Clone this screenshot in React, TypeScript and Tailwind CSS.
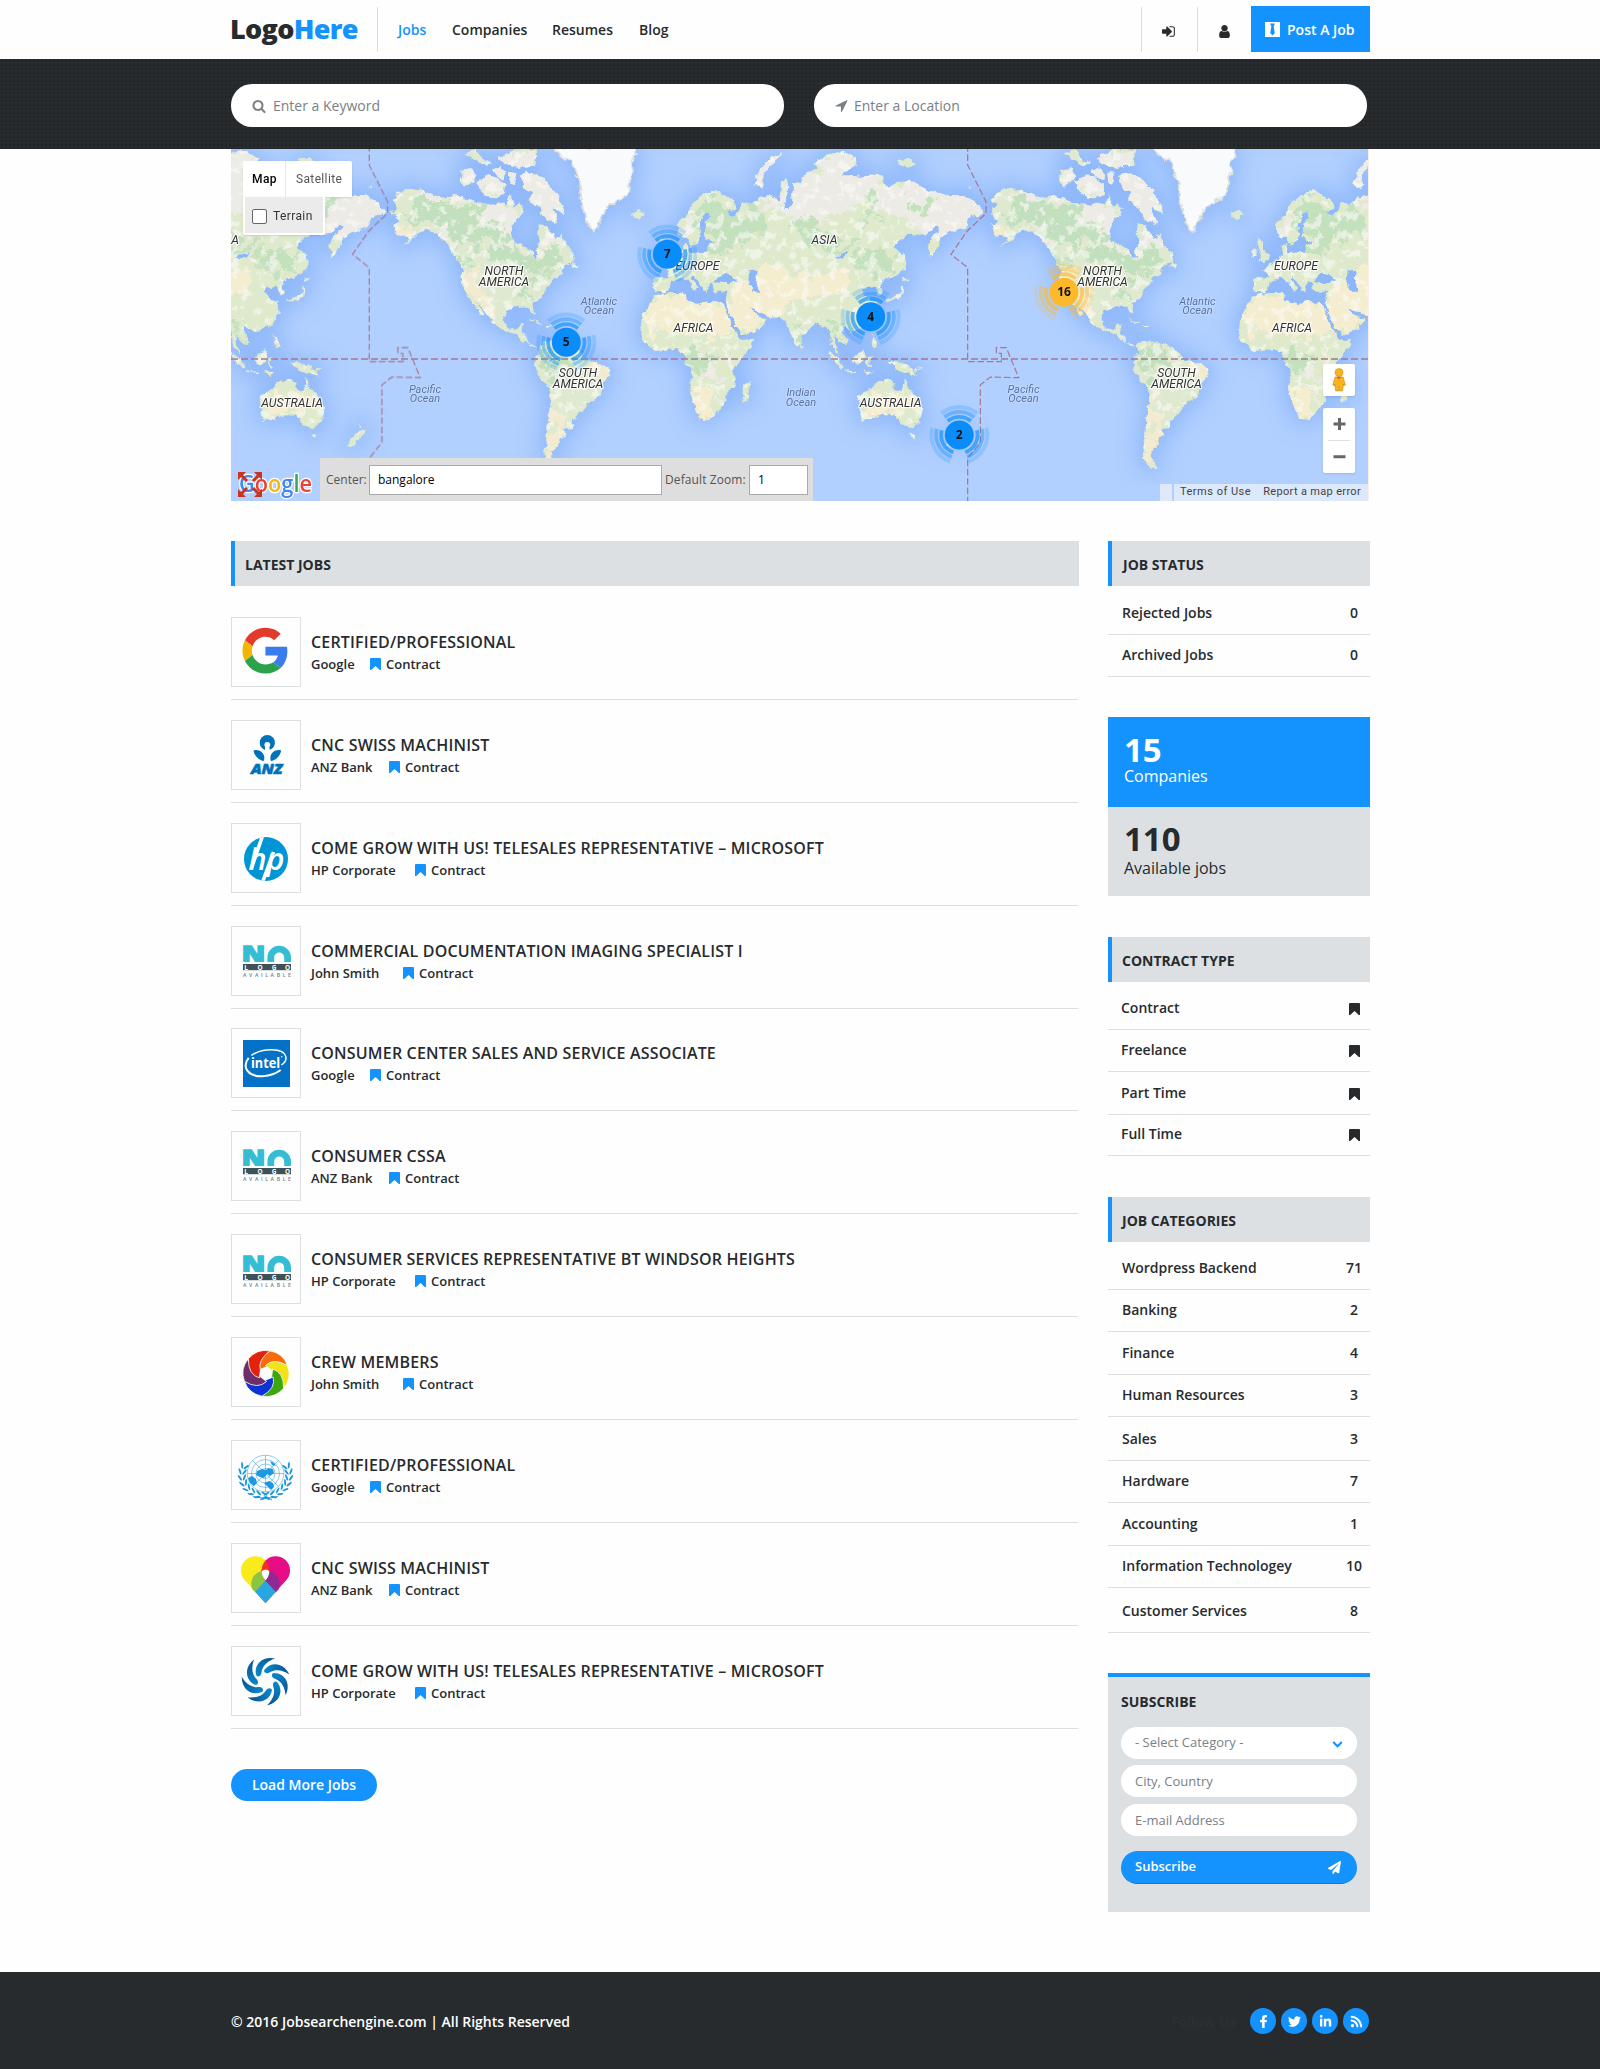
import React from "react";
import { FaFacebookF, FaLinkedinIn, FaPaperPlane, FaRss, FaTwitter } from "react-icons/fa";

/* ---------- icons ---------- */

function Glyph({ d, className }: { d: string; className: string }) {
  return (
    <svg viewBox="0 0 1792 1792" className={className} fill="currentColor" aria-hidden="true">
      <path d={d} />
    </svg>
  );
}

const SIGN_IN =
  "M1184 896q0 26-19 45l-544 544q-19 19-45 19t-45-19-19-45v-288h-448q-26 0-45-19t-19-45v-384q0-26 19-45t45-19h448v-288q0-26 19-45t45-19 45 19l544 544q19 19 19 45zm352-352v704q0 119-84.500 203.500t-203.500 84.500h-320q-13 0-22.500-9.500t-9.500-22.500q0-4-1-20t-.5-26.500 3-23.500 10-19.500 20.500-6.500h320q66 0 113-47t47-113v-704q0-66-47-113t-113-47h-312l-11.500-1-11.500-3-8-5.500-7-9-2-13.500q0-4-1-20t-.5-26.500 3-23.500 10-19.500 20.500-6.500h320q119 0 203.500 84.500t84.500 203.500z";
const USER =
  "M1536 1399q0 109-62.500 187t-150.500 78h-854q-88 0-150.500-78t-62.500-187q0-85 8.500-160.500t31.500-152 58.500-131 94-89 134.500-34.500q131 128 313 128t313-128q76 0 134.500 34.500t94 89 58.500 131 31.500 152 8.500 160.500zm-256-887q0 159-112.500 271.500t-271.500 112.500-271.500-112.500-112.500-271.500 112.500-271.500 271.500-112.500 271.500 112.500 112.500 271.500z";
const SEARCH =
  "M1216 832q0-185-131.500-316.500t-316.500-131.500-316.500 131.500-131.500 316.500 131.500 316.500 316.500 131.500 316.500-131.500 131.500-316.500zm512 832q0 52-38 90t-90 38q-54 0-90-38l-343-342q-179 124-399 124-143 0-273.500-55.500t-225-150-150-225-55.500-273.500 55.500-273.500 150-225 225-150 273.500-55.500 273.500 55.500 225 150 150 225 55.500 273.500q0 220-124 399l343 343q37 37 37 90z";
const LOCATION =
  "M1593 349l-640 1280q-17 35-57 35-5 0-15-2-22-5-35.500-22.500t-13.500-39.500v-576h-576q-22 0-39.500-13.500t-22.500-35.500 4-42 29-30l1280-640q13-7 29-7 27 0 45 19 15 14 18.500 34.500t-6.500 39.500z";
const CHEVRON =
  "M1683 808l-742 741q-19 19-45 19t-45-19l-742-741q-19-19-19-45.500t19-45.500l166-165q19-19 45-19t45 19l531 531 531-531q19-19 45-19t45 19l166 165q19 19 19 45.500t-19 45.500z";

function Bookmark({ className }: { className: string }) {
  return (
    <svg viewBox="0 0 11 12" className={className} fill="currentColor" aria-hidden="true">
      <path d="M0 1Q0 0 1 0H10Q11 0 11 1V12H9.800L5.500 8 1.200 12H0z" />
    </svg>
  );
}

function TieIcon() {
  return (
    <svg viewBox="0 0 15 15" className="h-[15px] w-[15px]" aria-hidden="true">
      <rect width="15" height="15" fill="#fff" />
      <path d="M5 1.500h5L8.600 4.300l1.200 6.700L7.500 13.600 5.200 11l1.200-6.700z" fill="#1493ff" />
    </svg>
  );
}

/* ---------- company logos, 70x70 ---------- */

function GoogleLogo() {
  return (
    <g transform="translate(11.500 10.700) scale(.955)">
      <path fill="#e33b2b" d="M24 9.500c3.540 0 6.710 1.220 9.210 3.600l6.850-6.850C35.900 2.380 30.470 0 24 0 14.620 0 6.510 5.380 2.560 13.220l7.980 6.190C12.430 13.720 17.740 9.500 24 9.500z" />
      <path fill="#3a7ced" d="M46.980 24.550c0-1.570-.15-3.090-.38-4.550H24v9.020h12.940c-.58 2.960-2.260 5.480-4.780 7.180l7.730 6c4.510-4.180 7.090-10.360 7.090-17.650z" />
      <path fill="#f2b600" d="M10.530 28.590c-.48-1.450-.76-2.990-.76-4.590s.27-3.140.76-4.590l-7.980-6.190C.92 16.460 0 20.120 0 24c0 3.880.92 7.540 2.560 10.780l7.970-6.190z" />
      <path fill="#2ba24b" d="M24 48c6.480 0 11.930-2.130 15.890-5.810l-7.730-6c-2.150 1.450-4.920 2.300-8.160 2.300-6.260 0-11.570-4.220-13.470-9.910l-7.980 6.190C6.510 42.620 14.620 48 24 48z" />
    </g>
  );
}

function AnzLogo() {
  return (
    <g fill="#0072bc">
      <circle cx="36.300" cy="22.700" r="7.600" />
      <circle cx="36.300" cy="24.800" r="2.900" fill="#fff" />
      <path d="M34.600 26h3.400l1 5h-5.400z" fill="#fff" />
      <path d="M22.500 30.500c5-1.800 9.600 1.500 10.600 5.500.5 2 .2 4-.4 5-3.500-.6-9.200-4-10.200-10.500z" />
      <path d="M50.200 30.500c-5-1.800-9.600 1.500-10.600 5.500-.5 2-.2 4 .4 5 3.500-.6 9.200-4 10.200-10.500z" />
      <text x="20" y="53.700" stroke="#0072bc" strokeWidth=".6" fontFamily="'Open Sans', sans-serif" fontWeight="800" fontStyle="italic" fontSize="14.500" textLength="31.500" lengthAdjust="spacingAndGlyphs">ANZ</text>
    </g>
  );
}

function HpLogo() {
  return (
    <g>
      <clipPath id="hp-disc"><circle cx="35" cy="36" r="22" /></clipPath>
      <circle cx="35" cy="36" r="22" fill="#0096d6" />
      <g clipPath="url(#hp-disc)" stroke="#fff" strokeWidth="3.600">
        <path d="M32.500 10 20 46.500M42.500 29 30.500 62" />
      </g>
      <text x="17.500" y="46.500" fill="#fff" fontFamily="'Open Sans', sans-serif" fontWeight="600" fontStyle="italic" fontSize="31" textLength="36" lengthAdjust="spacingAndGlyphs">hp</text>
    </g>
  );
}

function NoLogo({ y = 20 }: { y?: number }) {
  return (
    <g transform={`translate(0 ${y})`}>
      <clipPath id="no-logo-cut"><rect x="10" y="-2" width="52" height="18" /></clipPath>
      <g clipPath="url(#no-logo-cut)" fill="none" stroke="#35bdd4">
        <text x="10.800" y="16" fill="#35bdd4" strokeWidth="1.400" fontFamily="'Open Sans', sans-serif" fontWeight="800" fontSize="22.500" textLength="23.500" lengthAdjust="spacingAndGlyphs">N</text>
        <path d="M39.800 17.500V11.500a8.400 8.400 0 0 1 16.800 0V17.500" strokeWidth="6.800" />
      </g>
      <rect x="12" y="18" width="48" height="6.200" fill="#3c5258" />
      <g fontFamily="'Open Sans', sans-serif" textAnchor="middle">
        <g fontSize="6.500" fontWeight="700" fill="#fff">
          <text x="15" y="23.500">L</text>
          <text x="29" y="23.500">O</text>
          <text x="43" y="23.500">G</text>
          <text x="56.500" y="23.500">O</text>
        </g>
        <text x="36" y="30.800" fontSize="5.200" fontWeight="600" fill="#6f7f84" textLength="48">AVAILABLE</text>
      </g>
    </g>
  );
}

function IntelLogo() {
  return (
    <g>
      <rect x="12" y="12" width="47" height="47" fill="#0371c5" />
      <g fill="none" stroke="#fff" transform="rotate(-8 35 35)">
        <path d="M21.500 25.500C33 19.500 55 22 55.500 31.500c.2 4-3 6.500-5.500 7.500" strokeWidth="1.500" />
        <path d="M18.500 27.500C10 36 15.500 46.500 30 47.600c8 .6 14-1 18.500-3.600" strokeWidth="2" />
      </g>
      <text x="20" y="39.800" fill="#fff" fontFamily="'Open Sans', sans-serif" fontWeight="700" fontSize="14" textLength="29" lengthAdjust="spacingAndGlyphs">intel</text>
      <circle cx="50.800" cy="28.800" r=".7" fill="#fff" />
    </g>
  );
}

const PETALS = ["#f96a0a", "#f1e315", "#40a60f", "#0c33d3", "#6b2f6b", "#e2220d"];

function polar(r: number, deg: number) {
  const a = (deg * Math.PI) / 180;
  return `${(35 + r * Math.cos(a)).toFixed(2)} ${(36.500 + r * Math.sin(a)).toFixed(2)}`;
}

function PinwheelLogo() {
  return (
    <g stroke="#fff" strokeWidth=".8" strokeLinejoin="round">
      {PETALS.map((color, i) => {
        const a = -80 + i * 60;
        return (
          <path
            key={color}
            fill={color}
            d={`M${polar(23, a)}A23 23 0 0 1 ${polar(23, a + 60)}Q${polar(16, a + 18)} ${polar(6.500, a - 10)}L${polar(8, a - 74)}Q${polar(18, a - 44)} ${polar(23, a)}z`}
          />
        );
      })}
    </g>
  );
}

const LEAVES = [0, 1, 2, 3, 4, 5, 6, 7];

function UnLogo() {
  const wreath = LEAVES.map((i) => {
    const a = 205 - i * 16;
    const t = (a * Math.PI) / 180;
    const x = 34.500 + 23.500 * Math.cos(t);
    const y = 35 + 21 * Math.sin(t);
    return (
      <g key={i} transform={`translate(${x} ${y}) rotate(${a + 90})`}>
        <ellipse cx="1" cy="-2" rx="3.300" ry="1" transform="rotate(-28)" />
        <ellipse cx="1" cy="2" rx="3.300" ry="1" transform="rotate(28)" />
      </g>
    );
  });
  return (
    <g fill="#1b98e0" stroke="none">
      {wreath}
      <g transform="matrix(-1 0 0 1 69 0)">{wreath}</g>
      <g fill="none" stroke="#1b98e0" strokeWidth=".5">
        <circle cx="34.500" cy="33.500" r="18.300" />
        <circle cx="34.500" cy="33.500" r="14" />
        <circle cx="34.500" cy="33.500" r="9.500" />
        <circle cx="34.500" cy="33.500" r="5" />
        <path d="M34.500 15.200v36.600M16.200 33.500h36.600M21.600 20.600l25.800 25.800M47.400 20.600 21.600 46.400" />
        <path d="M22 56.500c8 2 17 2 25 0M29 60l6-3.500 6 3.500" strokeWidth="1" />
      </g>
      <path d="M26 31l5-2 4 1 2-2 5 1 1 4-4 3-3-2-3 4-4-1-4-2zM17 38l4-2 4 3 1 4-3 3-4-3zM33 43l5-2 4 2 1 4-3 3-4-4zM39 21l4 2 2 3-4-1z" />
    </g>
  );
}

function HeartLogo() {
  return (
    <g>
      <path d="M34.500 60 14 37.500A14.300 14.300 0 0 1 34.500 17.500L38 28 44 49z" fill="#f9ea1c" />
      <path d="M34.500 60 55 37.500A14.300 14.300 0 0 0 34.500 17.500L30 28 24.500 49z" fill="#e60d86" />
      <path d="M34.500 17.500c3 3 4 7 3.500 11h-7c-.500-4 .5-8 3.500-11z" fill="#ee3524" />
      <path d="M31 28c-9 2-13 11-9.500 18.500l3 3L34.500 38c-2-3-3.500-6-3.500-10z" fill="#8bc53f" />
      <path d="M38 28c9 2 13 11 9.500 18.500l-3 3L34.500 38c2-3 3.500-6 3.500-10z" fill="#8f2a90" />
      <path d="M34.500 37.700 24.300 48.800 34.500 60.200 44.700 48.800z" fill="#28a6e0" />
      <path d="M30.800 28c2-1.800 5.400-1.800 7.400 0 .5 4-1.700 7-3.700 9.300-2-2.300-4.200-5.300-3.700-9.300z" fill="#fff" />
    </g>
  );
}

function SwirlLogo() {
  return (
    <g transform="translate(34.800 35)">
      <linearGradient id="swirl-blue" x1="1" y1="0" x2="0" y2="1">
        <stop offset="0" stopColor="#08508f" />
        <stop offset="1" stopColor="#0c8ccb" />
      </linearGradient>
      {[0, 1, 2, 3, 4, 5, 6].map((i) => (
        <g key={i} transform={`rotate(${(i * 360) / 7})`} fill="url(#swirl-blue)">
          <path d="M-9.800-6.500C-12-17-3-25.500 9.500-22.500 3-20.500-3.500-16-4.300-8.500c-.4 4.400-4.900 5.200-5.500 2z" />
        </g>
      ))}
    </g>
  );
}

/* ---------- map ---------- */

const AMERICAS =
  "M30 205L50 180 35 165 45 148 75 128 110 135 140 142 180 158 220 150 260 165 290 175 330 180 350 172 375 180 385 150 400 185 412 175 425 195 415 215 395 235 388 265 395 290 430 305 452 318 455 340 468 340 465 310 478 290 470 270 472 238 490 240 510 262 525 280 540 265 550 290 575 325 580 345 540 370 545 385 520 400 505 420 490 435 485 455 455 475 460 505 450 505 440 485 400 485 375 495 368 520 375 550 405 555 415 535 425 535 420 560 435 575 440 595 468 604 455 607 430 590 405 570 380 562 335 540 330 520 300 490 282 462 310 515 298 508 265 460 245 430 240 390 245 380 225 340 190 290 165 265 130 255 105 270 90 290 55 305 85 285 75 275 45 270 35 240 55 230z" +
  "M470 600L490 588 520 590 550 598 575 605 600 625 610 645 650 655 685 670 680 695 660 720 655 750 620 775 600 800 575 825 570 850 545 852 550 870 530 885 530 905 510 920 515 945 530 968 515 972 495 955 488 920 495 880 500 820 508 770 505 730 480 705 460 670 462 640 475 620z" +
  "M240 75L270 70 285 90 275 110 250 125 238 115zM285 110L305 100 320 88 345 100 372 118 370 150 345 160 320 158 295 135zM250 25L285 15 300 40 330 55 310 60 275 40zM335 75L355 65 372 80 370 105 345 95zM382 80L405 85 400 120 385 115zM350 40L400 13 465 13 462 60 410 68 370 60zM415 95L435 80 480 95 520 140 550 190 545 208 515 185 530 238 495 222 465 180 440 165 455 140 425 130z" +
  "M750 205L775 195 790 208 775 222 755 218zM570 350L592 365 568 370zM446 523L475 530 480 537 450 528zM495 543L514 544 500 549zM835 280L848 285 850 310 867 330 863 345 835 350 843 330 832 305zM815 318L830 310 830 332 815 338z";

const GREENLAND = "M515 8L545 40 570 45 585 90 600 130 595 150 605 190 615 230 640 262 655 225 680 185 710 165 740 150 745 110 755 80 750 50 765 30 760 8z";

const OLD_WORLD =
  "M162 400L210 400 203 382 193 372 235 348 250 330 250 300 262 293 268 325 320 320 325 300 345 290 320 285 312 275 315 240 330 215 325 200 312 205 300 240 303 270 290 295 275 305 265 280 240 275 232 240 260 210 280 170 310 150 345 135 400 165 410 190 380 200 400 215 420 195 425 170 450 180 475 160 510 150 540 170 543 110 560 95 565 130 552 190 575 190 580 110 600 120 610 90 650 70 640 55 690 25 730 18 770 40 765 65 720 90 780 95 840 90 860 125 895 110 940 110 980 135 1040 150 1090 150 1120 165 1155 200 1135 212 1110 215 1100 230 1105 245 1050 262 1020 280 1018 300 990 340 983 300 1000 270 1025 245 1010 240 980 268 920 270 890 295 885 310 915 330 915 370 880 400 855 400 840 420 850 445 835 450 825 425 800 425 790 440 810 465 830 470 835 505 810 540 770 555 755 560 735 545 725 560 745 590 735 600 715 590 705 570 702 590 720 632 708 622 693 597 690 560 680 545 665 545 655 535 625 555 607 575 602 600 590 602 575 575 568 545 545 520 500 515 455 490 448 485 465 510 500 525 480 550 430 573 410 545 385 495 378 475 383 450 385 440 345 440 340 415 330 410 320 425 325 440 310 440 298 410 278 393 275 402 297 428 285 440 270 415 250 395 215 412 208 430 196 442 165 440z" +
  "M160 455L200 445 255 443 260 465 300 480 320 470 370 475 378 495 400 550 425 585 460 583 455 605 410 655 400 680 407 720 380 745 380 765 350 805 330 822 300 825 290 795 268 735 275 700 272 670 255 650 255 625 230 612 165 618 130 590 121 565 125 520z" +
  "M428 725L452 708 442 765 428 770z" +
  "M772 755L815 730 830 712 860 703 882 710 880 728 905 738 915 700 930 735 950 755 970 790 960 830 935 850 905 840 885 808 850 808 825 820 785 828z" +
  "M930 868L945 868 938 880zM862 650L890 652 930 665 950 692 920 685 895 678 885 665zM940 672L965 665 945 680zM755 640L790 612 797 640 775 662zM683 617L715 640 732 668 722 670 700 645zM732 675L770 680 770 685 735 680zM800 640L820 635 805 650 812 665 803 665zM785 680L820 680 800 690zM815 565L825 585 835 605 820 605zM852 465L900 450 908 425 912 435 905 458 862 470zM905 398L930 402 910 410zM912 320L920 360 914 375zM600 600L612 605 606 612z" +
  "M465 120L475 80 500 50 545 22 545 32 510 62 490 90 490 132zM890 45L920 38 955 60 940 65 900 62zM1100 125L1115 122 1110 130zM1035 903L1060 870 1090 850 1085 868 1055 902zM1070 835L1080 850 1072 845z";

const INLAND_WATER = "M350 400L370 385 395 392 412 405 385 415 345 412zM448 372L475 380 468 400 478 440 458 440 445 405zM700 335L745 320 735 335 715 340z";

const GREEN_AMERICA =
  "M60 195L130 165 230 155 300 190 340 235 380 290 450 330 530 300 545 360 480 390 420 370 360 350 300 300 240 280 160 230 90 250zM470 610L560 605 600 640 560 680 500 690 480 680z M240 300L270 380 250 390 220 330zM505 390L460 430 430 480 400 470 450 400z";
const BEIGE_AMERICA = "M245 380L290 370 320 470 350 530 330 530 260 450zM45 240L90 240 80 280 45 270zM610 655L685 670 675 700 640 690zM505 740L520 740 540 860 520 965 495 945z";
const GREY_AMERICA = "M40 140L140 140 200 165 380 180 425 190 390 260 380 270 300 190 180 200 110 160zM475 240L550 280 530 320 475 290zM140 200L190 220 250 340 215 320zM240 65L560 65 560 240 420 240 420 160 240 150zM380 180L420 190 400 240 440 310 380 290 340 230zM240 10L470 10 470 70 350 70z";
const GREEN_OLD = "M280 200L345 150 400 200 470 185 500 250 450 290 330 310 280 290zM560 200L640 215 660 250 700 290 760 300 740 320 660 310 600 260zM770 320L850 310 900 330 880 390 800 370zM800 150L830 150 830 240 790 240zM930 160L1000 170 980 210 930 200zM245 620L340 620 340 660 270 680zM580 540L610 540 600 600 585 590zM680 510L740 520 740 600 700 570z";
const BEIGE_OLD = "M125 560L160 450 260 445 380 475 430 570 300 570zM380 440L450 440 470 370 560 380 740 390 750 440 600 460 560 500 480 530 430 570 390 500zM790 770L930 740 950 800 860 805 790 825zM275 740L320 740 340 800 300 825z";
const GREY_OLD = "M465 180L540 150 580 110 700 20 770 60 860 110 1040 150 1155 200 1020 290 1000 250 860 200 780 150 700 220 620 230 540 200zM235 240L345 140 350 155 280 220 260 260zM530 425L600 440 600 470 550 450zM340 650L360 700 310 710zM640 30L770 30 780 150 700 210 620 210zM840 90L1155 150 1155 220 1000 280 850 180zM460 10L550 10 550 140 460 140z";

const DATE_LINE = "M1103 0V60L1158 170V205L1100 260 1053 328 1103 368V650H1204V625H1189V608H1219L1256 698 1171 696 1141 720V892L1103 940V1080";

function World() {
  return (
    <>
      <g transform="translate(749 -4) scale(.33333)">
        <path d={AMERICAS} fill="#dfe9cf" />
        <g clipPath="url(#clip-america)">
          <g filter="url(#rough)">
            <path d={GREY_AMERICA} fill="#ecebe6" />
            <path d={GREEN_AMERICA} fill="#c2e0bd" />
            <path d={BEIGE_AMERICA} fill="#f3ebcf" />
          </g>
          <rect x="20" y="0" width="880" height="1000" filter="url(#speckle)" />
        </g>
        <path d={GREENLAND} fill="#f8fafb" stroke="#dfe1df" strokeWidth="5" />
      </g>
      <g transform="translate(369 -4) scale(.33333)">
        <path d={OLD_WORLD} fill="#dfeacd" />
        <g clipPath="url(#clip-old)">
          <g filter="url(#rough)">
            <path d={GREY_OLD} fill="#edebe6" />
            <path d={BEIGE_OLD} fill="#f5edcf" />
            <path d={GREEN_OLD} fill="#c4e1be" />
          </g>
          <rect x="110" y="0" width="1060" height="910" filter="url(#speckle)" />
        </g>
        <path d={INLAND_WATER} fill="#8cb6fa" />
      </g>
    </>
  );
}

function Shelf() {
  return (
    <>
      <path transform="translate(749 -4) scale(.33333)" d={AMERICAS + GREENLAND} />
      <path transform="translate(369 -4) scale(.33333)" d={OLD_WORLD} />
    </>
  );
}

const WRAPS = [-598.500, 0, 598.500];

type Label = [lines: string[], x: number, y: number];

const LANDS: Label[] = [
  [["NORTH", "AMERICA"], 871.500, 125.500],
  [["SOUTH", "AMERICA"], 945.500, 227.500],
  [["EUROPE"], 466.500, 120.500],
  [["AFRICA"], 462.500, 183],
  [["ASIA"], 593.500, 95],
  [["AUSTRALIA"], 659.500, 258],
];
const OCEANS: Label[] = [
  [["Atlantic", "Ocean"], 966.500, 155.500],
  [["Pacific", "Ocean"], 792.500, 243.500],
  [["Indian", "Ocean"], 570, 247],
];

/* Repeats each label once per world copy, keeping those that fall on the map. */
function repeat(labels: Label[]): Label[] {
  return labels.flatMap(([lines, x, y]) =>
    WRAPS.map((dx): Label => [lines, x + dx, y]).filter(([, px]) => px > -10 && px < 1130),
  );
}

function arc(r: number, from: number, to: number) {
  const p = (d: number) => {
    const a = (d * Math.PI) / 180;
    return `${(r * Math.cos(a)).toFixed(2)} ${(r * Math.sin(a)).toFixed(2)}`;
  };
  return `M${p(from)}A${r} ${r} 0 0 1 ${p(to)}`;
}

function Cluster({ x, y, count, color }: { x: number; y: number; count: number; color: string }) {
  return (
    <g transform={`translate(${x} ${y})`}>
      {[[18.200, 0.65], [23.200, 0.4], [28, 0.2]].map(([r, opacity]) => (
        <path
          key={r}
          d={arc(r, -130, -50) + arc(r, -15, 71) + arc(r, 109, 195)}
          fill="none"
          stroke={color}
          strokeWidth="3.800"
          opacity={opacity}
        />
      ))}
      <circle r="14.500" fill={color} />
      <text y="4" textAnchor="middle" fontSize="12" fontWeight="700" fill="#111" fontFamily="'Open Sans', sans-serif">
        {count}
      </text>
    </g>
  );
}

function MapArt() {
  return (
    <svg viewBox="0 0 1137 352" className="block h-[352px] w-[1137px]" aria-label="World map">
      <defs>
        <clipPath id="clip-america"><path d={AMERICAS} /></clipPath>
        <clipPath id="clip-old"><path d={OLD_WORLD} /></clipPath>
        <filter id="rough" x="-5%" y="-5%" width="110%" height="110%">
          <feTurbulence type="fractalNoise" baseFrequency=".02" numOctaves="5" seed="4" result="n" />
          <feDisplacementMap in="SourceGraphic" in2="n" scale="110" xChannelSelector="R" yChannelSelector="G" />
        </filter>
        <filter id="speckle" x="0" y="0" width="100%" height="100%">
          <feTurbulence type="fractalNoise" baseFrequency=".035" numOctaves="4" seed="11" />
          <feColorMatrix values="0 0 0 0 .96  0 0 0 0 .96  0 0 0 0 .93  9 0 0 0 -4.950" />
          <feComponentTransfer><feFuncA type="linear" slope=".6" /></feComponentTransfer>
        </filter>
        <filter id="coast" x="-2%" y="-2%" width="104%" height="104%">
          <feTurbulence type="fractalNoise" baseFrequency=".16" numOctaves="3" seed="8" result="n" />
          <feDisplacementMap in="SourceGraphic" in2="n" scale="6" xChannelSelector="R" yChannelSelector="G" />
        </filter>
        <filter id="soft" x="-5%" y="-5%" width="110%" height="110%"><feGaussianBlur stdDeviation="11" /></filter>
        <g id="world"><World /></g>
        <g id="shelf"><Shelf /></g>
      </defs>
      <rect width="1137" height="352" fill="#b1d0ff" />
      <g filter="url(#soft)" fill="#86b1f9" stroke="#86b1f9" strokeWidth="34" strokeLinejoin="round" opacity=".8">
        {WRAPS.map((dx) => <use key={dx} href="#shelf" x={dx} />)}
      </g>
      <g filter="url(#coast)">
        {WRAPS.map((dx) => <use key={dx} href="#world" x={dx} />)}
      </g>
      <g fill="none" stroke="#a5788f" strokeWidth="1.300" strokeDasharray="7 3">
        <path d="M0 210H1137" />
        {WRAPS.map((dx) => (
          <path key={dx} transform={`translate(${369 + dx} -4) scale(.33333)`} d={DATE_LINE} strokeWidth="3.600" strokeDasharray="20 8" />
        ))}
      </g>
      <g fontFamily="Roboto, sans-serif" fontStyle="italic" textAnchor="middle" paintOrder="stroke" strokeLinejoin="round">
        {repeat(LANDS).map(([lines, x, y]) => (
          <text key={lines.join() + x} x={x} y={y} fontSize="12.200" fill="#333" stroke="#fff" strokeOpacity=".8" strokeWidth="2.500">
            {lines.map((line, i) => <tspan key={line} x={x} dy={i ? 11 : 0}>{line}</tspan>)}
          </text>
        ))}
        {repeat(OCEANS).map(([lines, x, y]) => (
          <text key={lines.join() + x} x={x} y={y} fontSize="11" fill="#5672a8" stroke="#cfe0ff" strokeOpacity=".7" strokeWidth="1.500">
            {lines.map((line, i) => <tspan key={line} x={x} dy={i ? 9.500 : 0}>{line}</tspan>)}
          </text>
        ))}
      </g>
      <Cluster x={335.300} y={193.300} count={5} color="#0a8dfb" />
      <Cluster x={436.300} y={105.300} count={7} color="#0a8dfb" />
      <Cluster x={639.700} y={167.700} count={4} color="#0a8dfb" />
      <Cluster x={728.300} y={286} count={2} color="#0a8dfb" />
      <Cluster x={833} y={143.300} count={16} color="#fdb92c" />
      <g fontFamily="'Open Sans', sans-serif" fontSize="23" fontWeight="600" paintOrder="stroke" stroke="#fff" strokeWidth="2.500" strokeLinejoin="round">
        <text x="8" y="343" textLength="73" lengthAdjust="spacingAndGlyphs">
          <tspan fill="#4285f4">G</tspan>
          <tspan fill="#ea4335">o</tspan>
          <tspan fill="#fbb605">o</tspan>
          <tspan fill="#4285f4">g</tspan>
          <tspan fill="#34a853">l</tspan>
          <tspan fill="#ea4335">e</tspan>
        </text>
      </g>
      <g fill="#cb3520" stroke="#cb3520">
        <path d="M7 323h8l-8 8zM31 323v8l-8-8zM7 348v-8l8 8zM31 348h-8l8-8z" stroke="none" />
        <path d="M10 326l6 6M28 326l-6 6M10 345l6-6M28 345l-6-6" strokeWidth="3" />
      </g>
    </svg>
  );
}

function JobMap() {
  return (
    <section className="relative ml-px h-[352px] w-[1138px] border-r border-[#fbeee6] font-[Roboto,sans-serif]">
      <MapArt />
      <div className="absolute top-3 left-3 flex h-9 w-[109px] rounded-t-xs bg-white text-[12px] leading-9 shadow-sm">
        <span className="w-[43px] border-r border-gray-200 pl-[9px] font-medium tracking-[.4px] text-black">Map</span>
        <span className="pl-[10px] tracking-[.35px] text-[#565656]">Satellite</span>
      </div>
      <label className="absolute top-12 left-3 flex h-[38px] w-[82px] items-center gap-[6px] rounded-b-xs border-2 border-t-0 border-white bg-[#ebebeb] pt-[2px] pl-[7px] text-[12px] tracking-[.4px] text-[#333] shadow-sm">
        <span className="h-[15px] w-[15px] rounded-[2px] border border-[#666] bg-white" />
        Terrain
      </label>
      <div className="absolute top-[309px] left-[89px] flex h-[43px] w-[493px] items-center bg-[#dedede] pl-[6px] font-['Open_Sans',sans-serif] text-[12px] text-[#555]">
        <span className="w-[43px]">Center:</span>
        <input defaultValue="bangalore" className="h-[30px] w-[293px] border border-[#a9a9a9] bg-white px-2 text-black outline-none" />
        <span className="w-[87px] pl-[3px] tracking-[.1px] whitespace-nowrap">Default Zoom:</span>
        <input defaultValue="1" className="h-[30px] w-[59px] border border-[#a9a9a9] bg-white px-2 text-black outline-none" />
      </div>
      <div className="absolute top-[335px] left-[929px] h-[17px] w-3 bg-[#dfe9f9]" />
      <div className="absolute top-[335px] left-[943px] flex h-[17px] w-[194px] items-center justify-between bg-[#dce8fb] pr-[7px] pl-[6px] text-[11px] whitespace-nowrap text-[#444]">
        <span className="tracking-[.5px]">Terms of Use</span>
        <span className="tracking-[.33px]">Report a map error</span>
      </div>
      <div className="absolute top-[215px] left-[1092px] flex h-8 w-8 items-center justify-center rounded-xs bg-white shadow">
        <svg viewBox="0 0 14 24" className="h-6 w-[14px]" aria-hidden="true">
          <circle cx="7" cy="4.500" r="4" fill="#f9b41c" stroke="#d4912a" strokeWidth=".6" />
          <path d="M3 9h8l2.500 8-2 .5V16l-1 7H7.500v-5h-1v5H3.700L2.700 16v1.500l-2-.5z" fill="#f9b41c" stroke="#c98a1f" strokeWidth=".6" />
          <path d="M4.500 8.800h5L7 11.500z" fill="#e2622d" />
        </svg>
      </div>
      <div className="absolute top-[259px] left-[1092px] flex h-[65px] w-8 flex-col items-center rounded-xs bg-white shadow">
        <svg viewBox="0 0 32 65" className="h-[65px] w-8" aria-hidden="true">
          <path d="M10.500 16h12M16.500 10v12M10.500 48.700h12" stroke="#666" strokeWidth="3" />
          <path d="M5 32.500h22" stroke="#e0e0e0" />
        </svg>
      </div>
    </section>
  );
}

/* ---------- page data ---------- */

const G = { company: "Google", width: "w-[59px]" };
const A = { company: "ANZ Bank", width: "w-[78px]" };
const H = { company: "HP Corporate", width: "w-[104px]" };
const J = { company: "John Smith", width: "w-[92px]" };

const JOBS = [
  { title: "CERTIFIED/PROFESSIONAL", ...G, logo: <GoogleLogo />, row: "h-[83px]" },
  { title: "CNC SWISS MACHINIST", ...A, logo: <AnzLogo />, row: "h-[103px]" },
  { title: "COME GROW WITH US! TELESALES REPRESENTATIVE – MICROSOFT", ...H, logo: <HpLogo />, row: "h-[103px]" },
  { title: "COMMERCIAL DOCUMENTATION IMAGING SPECIALIST I", ...J, logo: <NoLogo y={20} />, row: "h-[103px]" },
  { title: "CONSUMER CENTER SALES AND SERVICE ASSOCIATE", ...G, logo: <IntelLogo />, row: "h-[102px]" },
  { title: "CONSUMER CSSA", ...A, logo: <NoLogo y={19} />, row: "h-[103px]" },
  { title: "CONSUMER SERVICES REPRESENTATIVE BT WINDSOR HEIGHTS", ...H, logo: <NoLogo y={22} />, row: "h-[103px]" },
  { title: "CREW MEMBERS", ...J, logo: <PinwheelLogo />, row: "h-[103px]" },
  { title: "CERTIFIED/PROFESSIONAL", ...G, logo: <UnLogo />, row: "h-[103px]" },
  { title: "CNC SWISS MACHINIST", ...A, logo: <HeartLogo />, row: "h-[103px]" },
  { title: "COME GROW WITH US! TELESALES REPRESENTATIVE – MICROSOFT", ...H, logo: <SwirlLogo />, row: "h-[103px]" },
];

type Item = { label: string; value?: string; height: string };

const STATUS: Item[] = [
  { label: "Rejected Jobs", value: "0", height: "h-[49px]" },
  { label: "Archived Jobs", value: "0", height: "h-[42px]" },
];
const CONTRACTS: Item[] = [
  { label: "Contract", height: "h-12" },
  { label: "Freelance", height: "h-[42px]" },
  { label: "Part Time", height: "h-[43px]" },
  { label: "Full Time", height: "h-[41px]" },
];
const CATEGORIES: Item[] = [
  { label: "Wordpress Backend", value: "71", height: "h-12" },
  { label: "Banking", value: "2", height: "h-[42px]" },
  { label: "Finance", value: "4", height: "h-[43px]" },
  { label: "Human Resources", value: "3", height: "h-[42px]" },
  { label: "Sales", value: "3", height: "h-11" },
  { label: "Hardware", value: "7", height: "h-[42px]" },
  { label: "Accounting", value: "1", height: "h-[43px]" },
  { label: "Information Technologey", value: "10", height: "h-[42px]" },
  { label: "Customer Services", value: "8", height: "h-[45px]" },
];

/* ---------- building blocks ---------- */

function PanelTitle({ children, pad = "pl-[10px]" }: { children: React.ReactNode; pad?: string }) {
  return (
    <h2 className={`h-[45px] border-l-4 border-[#1493ff] bg-[#dce0e3] text-[14px] leading-[47px] font-bold ${pad}`}>
      {children}
    </h2>
  );
}

function ItemList({ items, pad = "pl-[14px]" }: { items: Item[]; pad?: string }) {
  return (
    <ul>
      {items.map((item) => (
        <li
          key={item.label}
          className={`flex items-end justify-between border-b border-[#dcdfe1] pb-[11px] text-[14px] leading-5 font-semibold ${pad} ${item.height}`}
        >
          <span>{item.label}</span>
          {item.value ? (
            <span className="w-8 text-center">{item.value}</span>
          ) : (
            <Bookmark className="mr-[10px] mb-[3px] h-3 w-[11px]" />
          )}
        </li>
      ))}
    </ul>
  );
}

function Header() {
  return (
    <header className="mx-auto flex h-[59px] w-[1140px] items-start">
      <div className="h-[59px] w-[147px] text-[27px] leading-[58px] font-extrabold tracking-[-.7px]">
        Logo<span className="text-[#1493ff]">Here</span>
      </div>
      <nav className="mt-[7px] flex h-[45px] border-l border-[#d9dcde] text-[14px] leading-[45px] font-semibold">
        <a className="ml-5 w-[54px] text-[#1493ff]">Jobs</a>
        <a className="w-[100px]">Companies</a>
        <a className="w-[87px]">Resumes</a>
        <a>Blog</a>
      </nav>
      <div className="mt-[7px] ml-auto flex h-[45px]">
        <a className="flex w-14 items-center justify-center border-l border-[#d9dcde] pt-[4px]">
          <Glyph d={SIGN_IN} className="h-[15px] w-[15px]" />
        </a>
        <a className="flex w-[54px] items-center justify-center border-l border-[#d9dcde] pt-[4px]">
          <Glyph d={USER} className="h-[15px] w-[15px]" />
        </a>
      </div>
      <a className="mt-[6px] flex h-[46px] w-[119px] items-center gap-[7px] bg-[#1493ff] pl-[14px] text-[14px] font-semibold text-white">
        <TieIcon />
        Post A Job
      </a>
    </header>
  );
}

function SearchBar() {
  return (
    <div className="h-[90px] bg-[#272b2e] bg-[radial-gradient(#212527_.8px,transparent_1px)] bg-[size:4px_4px] pt-[25px]">
      <div className="mx-auto flex w-[1140px] gap-[30px] pl-px">
        <label className="flex h-[43px] w-[553px] items-center gap-[7px] rounded-[21px] bg-white pl-[21px] text-[#7b8084]">
          <Glyph d={SEARCH} className="h-[14px] w-[14px]" />
          <input placeholder="Enter a Keyword" className="w-96 text-[14px] outline-none placeholder:text-[#7b8084]" />
        </label>
        <label className="flex h-[43px] w-[553px] items-center gap-[5px] rounded-[21px] bg-white pl-5 text-[#7b8084]">
          <Glyph d={LOCATION} className="h-[15px] w-[15px]" />
          <input placeholder="Enter a Location" className="w-96 text-[14px] outline-none placeholder:text-[#7b8084]" />
        </label>
      </div>
    </div>
  );
}

function LatestJobs() {
  return (
    <main className="w-[848px]">
      <PanelTitle>LATEST JOBS</PanelTitle>
      <ul className="mt-[31px] w-[847px]">
        {JOBS.map((job, i) => (
          <li key={i} className={`flex items-end border-b border-[#dcdfe1] pb-3 ${job.row}`}>
            <div className="h-[70px] w-[70px] border border-[#dcdfe1]">
              <svg viewBox="1 1 68 68" className="h-[68px] w-[68px]" aria-hidden="true">
                {job.logo}
              </svg>
            </div>
            <div className="mb-[13px] ml-[10px]">
              <h3 className="text-[16px] leading-6 font-semibold tracking-[.18px] whitespace-nowrap">{job.title}</h3>
              <div className="flex items-center text-[13px] leading-5 font-semibold">
                <span className={job.width}>{job.company}</span>
                <Bookmark className="mr-[5px] h-3 w-[11px] text-[#1493ff]" />
                <span>Contract</span>
              </div>
            </div>
          </li>
        ))}
      </ul>
      <button className="mt-10 h-8 w-[146px] rounded-full bg-[#1493ff] pb-[2px] text-[14px] font-semibold text-white">Load More Jobs</button>
    </main>
  );
}

function Subscribe() {
  return (
    <section className="mt-10 h-[239px] border-t-4 border-[#1493ff] bg-[#dce0e3] px-[13px] text-[13px] text-[#7b8084]">
      <h2 className="mt-[14px] mb-[14px] text-[14px] leading-[22px] font-bold text-[#272b2e]">SUBSCRIBE</h2>
      <div className="flex h-8 items-center justify-between rounded-2xl bg-white pr-[14px] pl-[14px]">
        <span className="-mt-px">- Select Category -</span>
        <Glyph d={CHEVRON} className="h-[11px] w-[11px] text-[#1493ff]" />
      </div>
      <input placeholder="City, Country" className="mt-[6px] block h-8 w-full rounded-2xl bg-white px-[14px] pb-px outline-none placeholder:text-[#7b8084]" />
      <input placeholder="E-mail Address" className="mt-[7px] block h-8 w-full rounded-2xl bg-white px-[14px] pb-px outline-none placeholder:text-[#7b8084]" />
      <button className="mt-[15px] flex h-[33px] w-full items-center justify-between rounded-full border-b border-[#0f7bd8] bg-[#1493ff] pr-4 pl-[14px] font-semibold text-white">
        Subscribe
        <FaPaperPlane className="h-[13px] w-[13px]" />
      </button>
    </section>
  );
}

function Sidebar() {
  return (
    <aside className="w-[262px]">
      <PanelTitle pad="pl-[11px]">JOB STATUS</PanelTitle>
      <ItemList items={STATUS} />
      <div className="mt-10 h-[90px] bg-[#1493ff] pt-[13px] pl-4 text-white">
        <div className="text-[33px] leading-[40px] font-bold">15</div>
        <div className="-mt-[4px] text-[16px] leading-5">Companies</div>
      </div>
      <div className="h-[89px] bg-[#dce0e3] pt-[12px] pl-4">
        <div className="text-[33px] leading-[40px] font-bold">110</div>
        <div className="-mt-px text-[16px] leading-5">Available jobs</div>
      </div>
      <div className="mt-[41px]">
        <PanelTitle pad="pl-[10px]">CONTRACT TYPE</PanelTitle>
        <ItemList items={CONTRACTS} pad="pl-[13px]" />
      </div>
      <div className="mt-[41px]">
        <PanelTitle pad="pl-[10px]">JOB CATEGORIES</PanelTitle>
        <ItemList items={CATEGORIES} />
      </div>
      <Subscribe />
    </aside>
  );
}

function Footer() {
  const icons = [FaFacebookF, FaTwitter, FaLinkedinIn, FaRss];
  return (
    <footer className="mt-[60px] h-[97px] bg-[#272b2e] text-[14px] font-semibold text-white">
      <div className="mx-auto flex w-[1140px] items-center pt-9 pl-px">
        <span>© 2016 Jobsearchengine.com | All Rights Reserved</span>
        <span className="mr-[14px] ml-auto text-[#2b3033]">Follow Us</span>
        <div className="mr-px flex gap-[5px]">
          {icons.map((Icon, i) => (
            <a key={i} className="flex h-[26px] w-[26px] items-center justify-center rounded-full bg-[#1493ff]">
              <Icon className="h-[13px] w-[13px]" />
            </a>
          ))}
        </div>
      </div>
    </footer>
  );
}

export default function App() {
  return (
    <div className="min-h-[2069px] bg-[#fefefe] font-['Open_Sans',sans-serif] text-[#272b2e]">
      <Header />
      <SearchBar />
      <div className="mx-auto w-[1140px]">
        <JobMap />
        <div className="mt-10 flex justify-between pl-px">
          <LatestJobs />
          <Sidebar />
        </div>
      </div>
      <Footer />
    </div>
  );
}
